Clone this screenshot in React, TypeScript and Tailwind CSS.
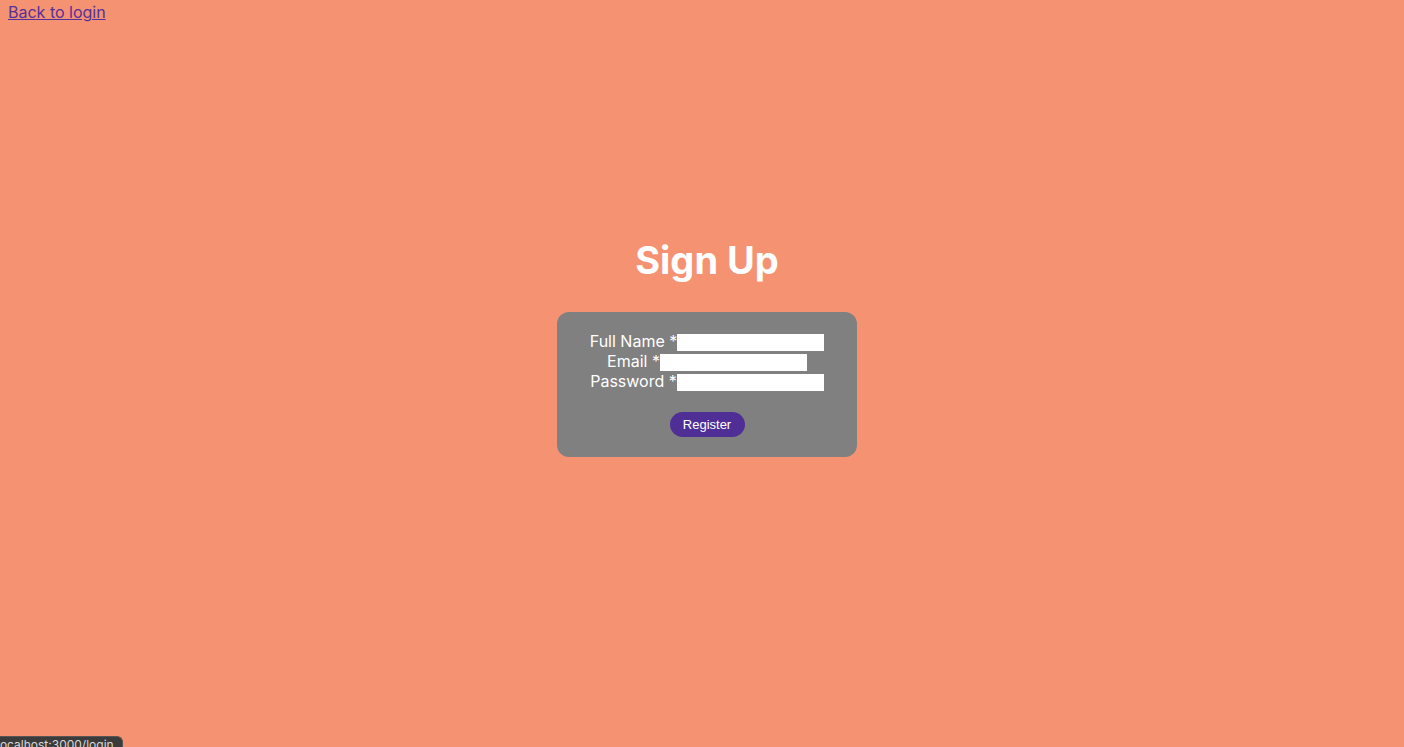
export default function App() {
  const fields = [
    { label: "Full Name *", type: "text" },
    { label: "Email *", type: "email" },
    { label: "Password *", type: "password" },
  ]

  return (
    <div className="relative min-h-[747px] bg-[#f49272] font-['Inter','Noto_Sans',sans-serif] overflow-hidden">
      <div className="pl-2">
        <a href="#" className="text-base leading-5 text-[#55309a] underline">
          Back to login
        </a>
      </div>

      <div className="flex flex-col items-center pt-[213px] pl-[10px]">
        <h1 className="text-[38px] leading-[46px] font-bold text-white">Sign Up</h1>

        <form className="mt-[29px] w-[300px] rounded-xl bg-[#808080] pt-[19px] pb-5 flex flex-col items-center">
          {fields.map((f) => (
            <div key={f.label} className="flex items-end justify-center h-5 text-base text-white">
              <label className="leading-5">{f.label}</label>
              <input
                type={f.type}
                className="w-[147px] h-[17px] bg-white outline-none border-0"
              />
            </div>
          ))}
          <button
            type="button"
            className="mt-[21px] h-[25px] w-[75px] rounded-full bg-[#4f2f96] text-[13px] text-white font-['Liberation_Sans',Arial,sans-serif]"
          >
            Register
          </button>
        </form>
      </div>

      {/* browser status bubble */}
      <div className="absolute bottom-0 left-0 w-[123px] h-[11px] overflow-hidden rounded-tr-md bg-[#3b3b3b] border-t border-r border-[#555]">
        <span className="block -ml-[3px] text-[12px] leading-[16px] text-[#d8d8d8] whitespace-nowrap">
          localhost:3000/login
        </span>
      </div>
    </div>
  )
}
